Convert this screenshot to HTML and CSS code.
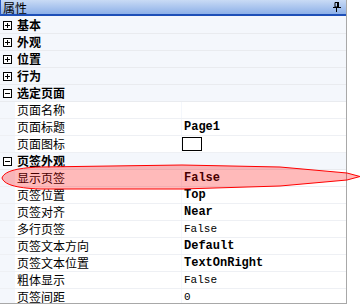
FILE: index.html
```html
<!DOCTYPE html>
<html>
  <head>
    <title>属性</title>
    <link rel="stylesheet" href="styles.css">
  </head>
  <body>
    <div class="frame">
      <div class="panel">
        <div class="caption">
          <span class="caption-text">属性</span>
          <svg class="pin" width="8" height="10" viewBox="0 0 8 10">
            <path d="M2 0.5H5.5V5H2Z" fill="none" stroke="#000" stroke-width="1"/>
            <rect x="4" y="0" width="2" height="5" fill="#000"/>
            <rect x="0" y="5" width="8" height="1" fill="#000"/>
            <rect x="3" y="6" width="1" height="4" fill="#000"/>
          </svg>
        </div>

        <div class="grid">
          <div class="cat"><span class="box plus"></span><span class="cat-name">基本</span></div>
          <div class="cat"><span class="box plus"></span><span class="cat-name">外观</span></div>
          <div class="cat"><span class="box plus"></span><span class="cat-name">位置</span></div>
          <div class="cat"><span class="box plus"></span><span class="cat-name">行为</span></div>
          <div class="cat"><span class="box"></span><span class="cat-name">选定页面</span></div>

          <div class="prop"><span class="gutter"></span><span class="name">页面名称</span><span class="value"></span></div>
          <div class="prop"><span class="gutter"></span><span class="name">页面标题</span><span class="value bold">Page1</span></div>
          <div class="prop"><span class="gutter"></span><span class="name">页面图标</span><span class="value"><span class="icon-box"></span></span></div>

          <div class="cat"><span class="box"></span><span class="cat-name">页签外观</span></div>

          <div class="prop"><span class="gutter"></span><span class="name">显示页签</span><span class="value bold">False</span></div>
          <div class="prop"><span class="gutter"></span><span class="name">页签位置</span><span class="value bold">Top</span></div>
          <div class="prop"><span class="gutter"></span><span class="name">页签对齐</span><span class="value bold">Near</span></div>
          <div class="prop"><span class="gutter"></span><span class="name">多行页签</span><span class="value">False</span></div>
          <div class="prop"><span class="gutter"></span><span class="name">页签文本方向</span><span class="value bold">Default</span></div>
          <div class="prop"><span class="gutter"></span><span class="name">页签文本位置</span><span class="value bold">TextOnRight</span></div>
          <div class="prop"><span class="gutter"></span><span class="name">粗体显示</span><span class="value">False</span></div>
          <div class="prop"><span class="gutter"></span><span class="name">页签间距</span><span class="value">0</span></div>
        </div>
      </div>

      <svg class="mark" width="364" height="304" viewBox="0 0 364 304">
        <path d="M2 178 C4 172 14 168 40 167 L182 165 L280 167 L347 173 L360 176.5 L347 180 L280 186 L182 189 L40 189 C14 188 4 184 2 178 Z"
              fill="rgba(255,0,0,0.27)" stroke="#f00" stroke-width="1"/>
      </svg>
    </div>
  </body>
</html>
```

FILE: styles.css
```css
body {
  margin: 0;
  background: #fff;
  font-family: "Noto Sans CJK SC", "DejaVu Sans", sans-serif;
  font-size: 12px;
  color: #000;
}

.frame {
  position: relative;
  width: 364px;
  height: 304px;
  overflow: hidden;
}

.panel {
  width: 346px;
  height: 303px;
  border-right: 1px solid #a8a8a8;
  border-bottom: 1px solid #a8a8a8;
  overflow: hidden;
}

.caption {
  display: flex;
  align-items: center;
  justify-content: space-between;
  height: 14px;
  padding: 0 5px 0 2px;
  background: linear-gradient(#c9dbf5, #8db0e8);
  border-left: 1px solid #2a5cc4;
  border-bottom: 2px solid #1d4fb8;
}

.caption-text {
  font-size: 12px;
  line-height: 14px;
  padding-top: 1px;
}

.pin {
  display: block;
}

.grid {
  border-top: 1px solid #f4f7fc;
}

.cat {
  display: flex;
  align-items: center;
  height: 16px;
  border-bottom: 1px solid #e9ebef;
  background: #f4f7fc;
}

.box {
  position: relative;
  width: 7px;
  height: 7px;
  margin: 0 5px 0 3px;
  border: 1px solid #000;
  background: #fff;
}

.box::before {
  content: "";
  position: absolute;
  left: 1px;
  top: 3px;
  width: 5px;
  height: 1px;
  background: #000;
}

.plus::after {
  content: "";
  position: absolute;
  left: 3px;
  top: 1px;
  width: 1px;
  height: 5px;
  background: #000;
}

.cat-name {
  font-weight: bold;
  line-height: 16px;
}

.prop {
  display: grid;
  grid-template-columns: 15px 166px 1fr;
  height: 16px;
  border-bottom: 1px solid #eef0f4;
  background: #f4f7fc;
}

.gutter {
  background: #f4f7fc;
}

.name {
  padding-left: 2px;
  line-height: 16px;
  background: #fff;
  white-space: nowrap;
}

.value {
  display: flex;
  align-items: center;
  padding-left: 2px;
  margin-left: 1px;
  background: #fff;
  font-family: "Liberation Mono", monospace;
  font-size: 11px;
}

.value.bold {
  font-weight: bold;
  font-size: 12px;
}

.icon-box {
  width: 18px;
  height: 12px;
  margin-left: -2px;
  border: 1px solid #000;
  background: #fff;
}

.mark {
  position: absolute;
  left: 0;
  top: 0;
  pointer-events: none;
}
```
